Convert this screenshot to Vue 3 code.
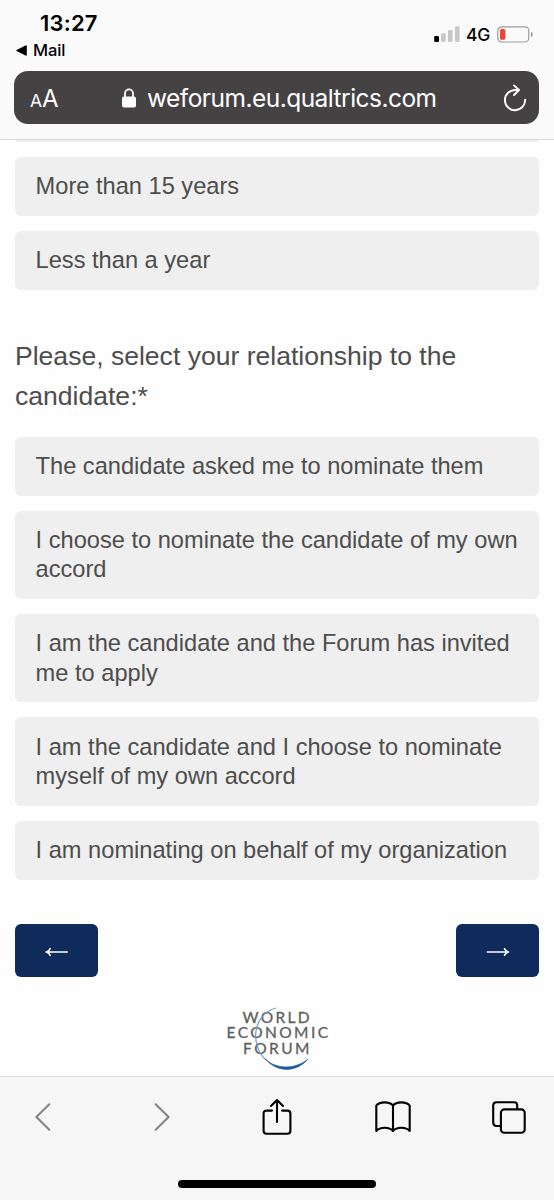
<template>
  <div class="phone">
    <header class="top">
      <div class="status">
        <div class="left">
          <div class="time">13:27</div>
          <div class="back">
            <svg class="tri" viewBox="0 0 11 11">
              <path d="M0.6 4.9 L10 0.2 Q10.8 0 10.8 0.9 V10.1 Q10.8 11 10 10.8 L0.6 6.1 Q-0.2 5.5 0.6 4.9Z" />
            </svg>
            <span>Mail</span>
          </div>
        </div>
        <div class="right">
          <svg class="signal" viewBox="0 0 26 16">
            <rect x="0.2" y="10" width="4.8" height="6" rx="1.2" fill="#000" />
            <rect x="7.1" y="7.2" width="4.6" height="8.8" rx="1.2" fill="#c9c8c9" />
            <rect x="14" y="3.9" width="4.6" height="12.1" rx="1.2" fill="#c9c8c9" />
            <rect x="21" y="0.2" width="4.6" height="15.8" rx="1.2" fill="#c9c8c9" />
          </svg>
          <span class="net">4G</span>
          <svg class="battery" viewBox="0 0 37 17">
            <rect x="0.8" y="0.8" width="31" height="15.2" rx="4" fill="none" stroke="#9b9a9b" stroke-width="1.2" />
            <rect x="3" y="3" width="5.4" height="10.8" rx="1.6" fill="#eb4537" />
            <path d="M34 5.7 Q35.8 6.4 35.8 8.4 Q35.8 10.4 34 11.1Z" fill="#9b9a9b" />
          </svg>
        </div>
      </div>

      <div class="address">
        <div class="aa"><span class="small">A</span><span class="big">A</span></div>
        <div class="url">
          <svg class="lock" viewBox="0 0 14 20">
            <rect x="0" y="8.6" width="14" height="10.8" rx="2" fill="#fff" />
            <path d="M3 9 V5.4 a4 4 0 0 1 8 0 V9" fill="none" stroke="#fff" stroke-width="1.8" />
          </svg>
          <span class="host">weforum.eu.qualtrics.com</span>
        </div>
        <svg class="reload" viewBox="0 0 24 28">
          <path d="M15.6 6 H12 A10.1 10.1 0 1 0 22.1 15.6" />
          <path d="M11 1.4 L16 6 L11 11" />
        </svg>
      </div>
    </header>

    <main class="page">
      <div class="choice cut"></div>
      <div v-for="c in years" :key="c" class="choice">{{ c }}</div>

      <h2 class="question">Please, select your relationship to the candidate:*</h2>

      <div v-for="c in relations" :key="c" class="choice">{{ c }}</div>

      <div class="buttons">
        <button class="btn">
          <svg viewBox="0 0 24 12">
            <path d="M22.2 6 H1.6 M5.2 2.6 Q4 5 1.6 6 Q4 7 5.2 9.4" />
          </svg>
        </button>
        <button class="btn">
          <svg viewBox="0 0 24 12">
            <path d="M1.4 6 H22 M18.4 2.6 Q19.6 5 22 6 Q19.6 7 18.4 9.4" />
          </svg>
        </button>
      </div>

      <svg class="logo" viewBox="0 0 104 66">
        <g class="word">
          <text x="17.5" y="17.5" textLength="67">WORLD</text>
          <text x="1.5" y="33" textLength="101.5">ECONOMIC</text>
          <text x="18" y="48.7" textLength="66.5">FORUM</text>
        </g>
        <path d="M51 3 C28 9 24 40 41.5 55.5" fill="none" stroke="#6d9dcd" stroke-width="1.2" />
        <path d="M40.5 54.2 C51 64 69 65 83 54.2 C70 69 51 66.5 40.5 54.2Z" fill="#1f56a5" stroke="#1f56a5" stroke-width="0.6" />
      </svg>
    </main>

    <footer class="toolbar">
      <div class="tools">
        <svg class="prev" viewBox="0 0 16 28"><path d="M14.3 1.3 L1.4 14 L14.3 26.7" /></svg>
        <svg class="next" viewBox="0 0 16 28"><path d="M1.7 1.3 L14.6 14 L1.7 26.7" /></svg>
        <svg class="share" viewBox="0 0 30 38">
          <path d="M10 12.6 H4.6 Q1.6 12.6 1.6 15.6 V32.8 Q1.6 35.8 4.6 35.8 H25.4 Q28.4 35.8 28.4 32.8 V15.6 Q28.4 12.6 25.4 12.6 H20" />
          <path d="M15 24 V2.4 M9 8 L15 2 L21 8" />
        </svg>
        <svg class="book" viewBox="0 0 36 32">
          <path d="M18 4.6 Q15.5 1.4 9.7 1.4 Q3.8 1.4 1.3 4.6 V30 Q4 26.8 9.7 26.8 Q15.3 26.8 18 30 Q20.7 26.8 26.3 26.8 Q32 26.8 34.7 30 V4.6 Q32.2 1.4 26.3 1.4 Q20.5 1.4 18 4.6 V30" />
        </svg>
        <svg class="tabs" viewBox="0 0 34 33">
          <path d="M8.5 25 H4.6 Q1.2 25 1.2 21.6 V4.6 Q1.2 1.2 4.6 1.2 H22 Q25.2 1.2 25.2 4.6 V8" />
          <rect x="8.9" y="8.4" width="23.8" height="23.4" rx="3.4" />
        </svg>
      </div>
      <div class="home"></div>
    </footer>
  </div>
</template>

<script setup>
const years = ['More than 15 years', 'Less than a year']

const relations = [
  'The candidate asked me to nominate them',
  'I choose to nominate the candidate of my own accord',
  'I am the candidate and the Forum has invited me to apply',
  'I am the candidate and I choose to nominate myself of my own accord',
  'I am nominating on behalf of my organization',
]
</script>

<style>
body {
  margin: 0;
  background: #fff;
}
</style>

<style scoped>
.phone {
  width: 554px;
  height: 1200px;
  display: flex;
  flex-direction: column;
  overflow: hidden;
  background: #fefefe;
  font-family: 'Liberation Sans', Arial, sans-serif;
}

svg {
  display: block;
  flex: none;
}

.top {
  box-sizing: border-box;
  height: 140px;
  flex: none;
  padding: 0 15px 0 14px;
  background: #fbfafb;
  border-bottom: 1.5px solid #d9d9d9;
  font-family: Inter, sans-serif;
}

.status {
  height: 71px;
  display: flex;
  justify-content: space-between;
}
.time {
  padding: 10px 0 0 26px;
  font-size: 22px;
  line-height: 26px;
  font-weight: 600;
  letter-spacing: 0.2px;
}
.back {
  display: flex;
  align-items: center;
  gap: 6px;
  padding: 5px 0 0 2px;
  font-size: 16.5px;
  line-height: 18px;
  font-weight: 500;
  letter-spacing: -0.1px;
}
.tri {
  width: 11px;
  height: 11px;
}
.right {
  height: 18px;
  display: flex;
  align-items: center;
  margin: 25px 5px 0 0;
}
.signal {
  width: 26px;
  height: 16px;
}
.net {
  width: 24px;
  margin: 0 7px 0 6px;
  font-size: 17.5px;
  font-weight: 500;
  letter-spacing: -0.2px;
}
.battery {
  width: 37px;
  height: 17px;
}

.address {
  height: 53px;
  display: flex;
  align-items: center;
  border-radius: 14px;
  background: #444243;
  color: #fff;
}
.aa {
  width: 107.5px;
  padding: 5px 0 0 16px;
  box-sizing: border-box;
  line-height: 30px;
}
.small {
  font-size: 17.5px;
}
.big {
  font-size: 24px;
}
.url {
  display: flex;
  align-items: center;
  gap: 11.5px;
  flex: 1;
}
.lock {
  width: 14px;
  height: 20px;
}
.host {
  font-size: 24.5px;
  letter-spacing: -0.53px;
  white-space: nowrap;
}
.reload {
  width: 24px;
  height: 28px;
  margin-right: 12px;
}
.reload path {
  fill: none;
  stroke: #fff;
  stroke-width: 1.9;
  stroke-linecap: round;
  stroke-linejoin: round;
}

.page {
  flex: 1;
  min-height: 0;
  overflow: hidden;
  padding: 0 15px;
}
.choice {
  box-sizing: border-box;
  margin-bottom: 15px;
  padding: 15.3px 20px 14.1px 20.6px;
  border-radius: 6px;
  background: #efefef;
  color: #4d4d4d;
  font-size: 23.64px;
  line-height: 29.55px;
}
.cut {
  height: 2px;
  padding: 0;
  border-radius: 0 0 6px 6px;
}
.question {
  margin: 45.7px 0 21px;
  color: #4d4d4d;
  font-size: 26.55px;
  line-height: 40px;
  font-weight: 400;
}

.buttons {
  display: flex;
  justify-content: space-between;
  margin-top: 44.3px;
}
.btn {
  width: 83px;
  height: 53px;
  display: flex;
  align-items: center;
  justify-content: center;
  padding: 3px 0 0;
  border: 0;
  border-radius: 6px;
  background: #0f2b5b;
}
.btn svg {
  width: 24px;
  height: 12px;
}
.btn path {
  fill: none;
  stroke: #fff;
  stroke-width: 1.5;
  stroke-linecap: round;
}

.logo {
  width: 104px;
  height: 66px;
  margin: 28px auto 0;
}
.word {
  fill: #5e5e60;
  stroke: #5e5e60;
  stroke-width: 0.3;
  font-family: Lato, sans-serif;
  font-size: 15.5px;
}

.toolbar {
  box-sizing: border-box;
  height: 124px;
  flex: none;
  border-top: 1.5px solid #dcdcdc;
  background: #f6f6f7;
}
.tools {
  height: 80px;
  display: flex;
  align-items: center;
  padding-left: 35px;
}
.tools path,
.tools rect {
  fill: none;
  stroke: #000;
  stroke-width: 2.1;
  stroke-linecap: round;
  stroke-linejoin: round;
}
.tools .prev path,
.tools .next path {
  stroke: #858585;
}
.prev,
.next {
  width: 16px;
  height: 28px;
}
.next {
  margin-left: 103px;
}
.share {
  width: 30px;
  height: 38px;
  margin-left: 92px;
}
.book {
  width: 36px;
  height: 32px;
  margin-left: 83px;
}
.tabs {
  width: 34px;
  height: 33px;
  margin-left: 81px;
}
.home {
  width: 198px;
  height: 8px;
  margin: 23px auto 0;
  border-radius: 4px;
  background: #000;
}
</style>
